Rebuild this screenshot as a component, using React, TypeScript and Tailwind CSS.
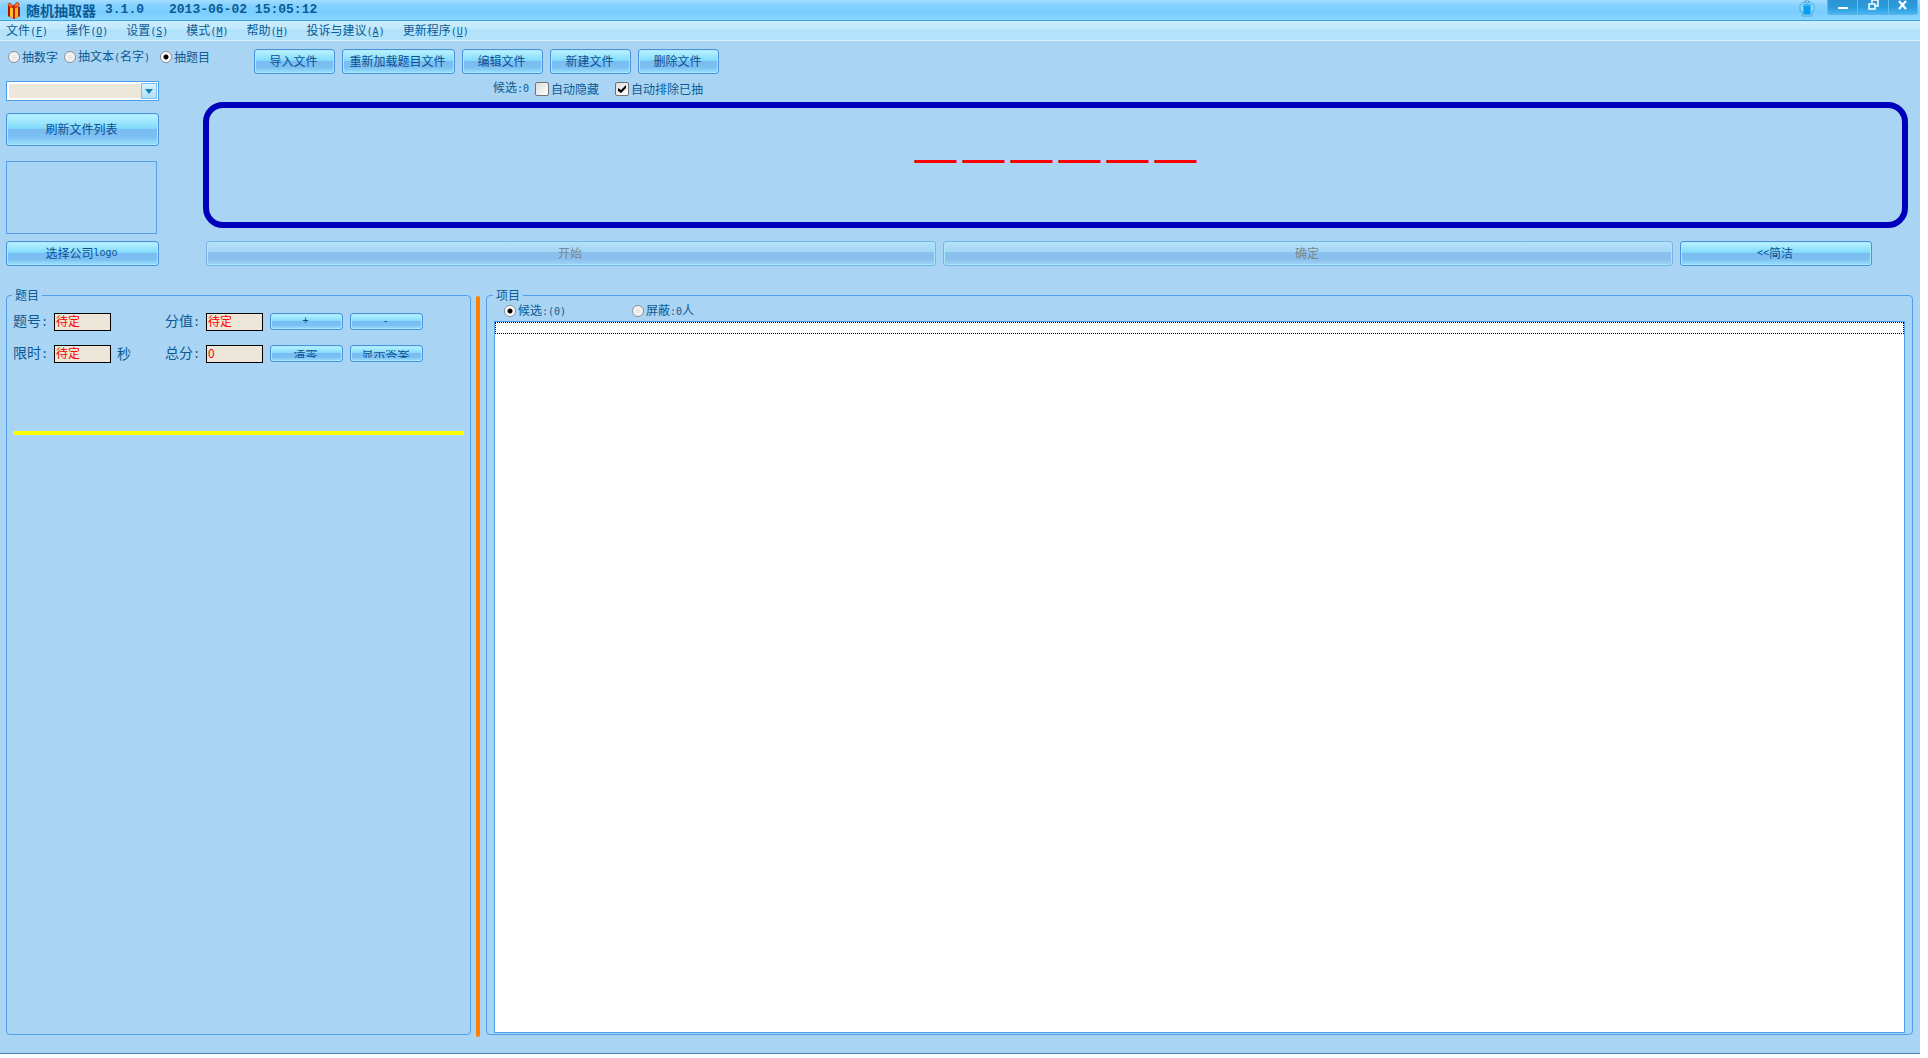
import { useState } from "react";
import type { ReactNode } from "react";

const L = ({ children }: { children: ReactNode }) => (
  <span className="font-['DejaVu_Sans_Mono',monospace] text-[10px]">{children}</span>
);

const menus = [
  ["文件", "F"],
  ["操作", "O"],
  ["设置", "S"],
  ["模式", "M"],
  ["帮助", "H"],
  ["投诉与建议", "A"],
  ["更新程序", "U"],
];

function SkinButton({ children, className = "", disabled = false }: { children: ReactNode; className?: string; disabled?: boolean }) {
  const look = disabled
    ? "border-[#7ab3e2] bg-[linear-gradient(#b9dff8_0%,#a0d6f6_44%,#8abfee_46%,#8ac0ee_75%,#a3d4f5_100%)] text-[#7d8790]"
    : "border-[#4a92dd] bg-[linear-gradient(#bdf3fe_0%,#82dbfc_46%,#7abcf2_50%,#7cc0f3_75%,#9be2fb_100%)] text-[#0b4f91]";
  return (
    <button
      type="button"
      disabled={disabled}
      className={`flex items-center justify-center overflow-hidden rounded-[3px] border pr-[2px] pb-[2px] text-[12px] leading-3 whitespace-nowrap shadow-[inset_0_0_0_1px_#a8eafd] ${look} ${className}`}
    >
      {children}
    </button>
  );
}

function Radio({ name, children, checked, onChange, className = "" }: { name: string; children: ReactNode; checked: boolean; onChange: () => void; className?: string }) {
  return (
    <label className={`flex items-center gap-[2px] leading-3 whitespace-nowrap ${className}`}>
      <input
        type="radio"
        name={name}
        checked={checked}
        onChange={onChange}
        className="size-3 shrink-0 appearance-none rounded-full border border-[#8d8f92] bg-[radial-gradient(#e4e4e4,#ffffff)] checked:bg-[radial-gradient(circle,#000_0_2px,#fff_3px)]"
      />
      <span>{children}</span>
    </label>
  );
}

function Check({ children, initial = false }: { children: ReactNode; initial?: boolean }) {
  const [on, setOn] = useState(initial);
  return (
    <label className="flex items-center gap-[2px] leading-3 whitespace-nowrap">
      <span className="relative flex size-[14px] shrink-0">
        <input
          type="checkbox"
          checked={on}
          onChange={() => setOn(!on)}
          className="size-[14px] appearance-none rounded-[2px] border border-[#6f7375] bg-[linear-gradient(135deg,#dedede,#ffffff)] checked:bg-white"
        />
        {on && (
          <svg viewBox="0 0 14 14" className="pointer-events-none absolute inset-0 size-[14px]">
            <path d="M3 6v3l3 2 5-5V3L6 8z" fill="#000" />
          </svg>
        )}
      </span>
      <span>{children}</span>
    </label>
  );
}

function Field({ id, label, value }: { id: string; label: string; value: string }) {
  return (
    <>
      <label htmlFor={id} className="w-[40px] shrink-0 pb-[2px] text-[14px] leading-4 whitespace-nowrap">
        {label}
        <span className="font-['Liberation_Mono',monospace] text-[12px]">:</span>
      </label>
      <input
        id={id}
        readOnly
        value={value}
        className="ml-px h-[18px] w-[57px] shrink-0 border border-black bg-[#ece7d8] px-px pb-[3px] text-[12px] leading-3 text-[#ff0000] outline-none"
      />
    </>
  );
}

function Gift() {
  return (
    <svg viewBox="0 0 14 17" className="ml-[7px] h-[17px] w-[14px] shrink-0">
      <path d="M1 4l5-1 7 2v9l-6 3-6-3z" fill="#e3200e" />
      <path d="M1 4l2 1v10l-2-1z" fill="#b01205" />
      <path d="M3 5l3 1v10l-3-1z" fill="#ffc21a" />
      <path d="M6 6h2v11l-2-1z" fill="#c41a0a" />
      <path d="M8 6l3-1v10l-3 1z" fill="#ffb31a" />
      <path d="M11 5l2 0v9l-2 1z" fill="#b81808" />
      <path d="M6 5C5 1 1 0 1 3l2 2zM7 5c1-5 5-6 5-2L10 5z" fill="#ff7a22" stroke="#b8260a" strokeWidth=".8" />
    </svg>
  );
}

function Shirt() {
  return (
    <svg viewBox="0 0 16 17" className="h-[17px] w-4">
      <path d="M5 2h6l4 3v6h-2v5H3v-5H1V5z" fill="#8fdcfd" stroke="#4aa8e2" />
      <path d="M4 4h8v11H4z" fill="#3db6f8" />
      <path d="M5 6h6v8H5z" fill="#0c9cf0" />
      <path d="M6 1h4l-1 2H7z" fill="#e8faff" stroke="#2b87c8" strokeWidth=".8" />
    </svg>
  );
}

function Title() {
  return (
    <header className="flex h-[21px] shrink-0 items-start justify-between rounded-tl-md border-b border-[#3aa3e8] bg-[linear-gradient(#a5dcff_0%,#86d2ff_25%,#78cdff_60%,#8ad6ff_100%)]">
      <div className="flex h-5 items-center">
        <Gift />
        <h1 className="ml-[5px] flex items-center text-[14px] leading-4 font-bold text-[#0b5a94]">
          随机抽取器
          <span className="ml-[9px] font-['Liberation_Mono',monospace] text-[13px] whitespace-pre">3.1.0</span>
          <span className="ml-[25px] font-['Liberation_Mono',monospace] text-[13px] whitespace-pre">2013-06-02 15:05:12</span>
        </h1>
      </div>
      <div className="flex items-start pr-[2px]">
        <button type="button" aria-label="皮肤" className="mr-3">
          <Shirt />
        </button>
        <div className="flex h-[15px] divide-x divide-[#5fc0f2] overflow-hidden rounded-b-[3px] border border-t-0 border-[#5db5ea] bg-[linear-gradient(#2c93d3,#2a9bdd_50%,#45b4ee)]">
          <button type="button" aria-label="最小化" className="w-[30px]">
            <svg viewBox="0 0 30 14" className="h-[14px] w-[30px]"><path d="M10 7h10v2H10z" fill="#fff" /></svg>
          </button>
          <button type="button" aria-label="还原" className="w-[31px]">
            <svg viewBox="0 0 31 14" className="h-[14px] w-[31px]">
              <path d="M14 3V0h6v6h-3" fill="none" stroke="#fff" strokeWidth="1.5" />
              <path d="M11 4h6v5h-6z" fill="none" stroke="#fff" strokeWidth="1.5" />
            </svg>
          </button>
          <button type="button" aria-label="关闭" className="w-[28px]">
            <svg viewBox="0 0 28 14" className="h-[14px] w-[28px]"><path d="M10 1l7 8M17 1l-7 8" stroke="#fff" strokeWidth="2.2" /></svg>
          </button>
        </div>
      </div>
    </header>
  );
}

export default function App() {
  const [mode, setMode] = useState(2);
  const [view, setView] = useState(0);
  return (
    <div className="flex h-screen flex-col bg-white pr-2 pb-1 font-['Noto_Sans_CJK_SC',sans-serif] text-[12px] text-[#0b5a94]">
      <div className="flex min-h-0 flex-1 flex-col border-b border-[#4a80b4] bg-[#aad4f3]">
        <Title />
        <nav className="flex h-5 shrink-0 items-center gap-[18px] border-b border-[#d9f3fd] bg-[linear-gradient(#cdedff_0%,#c0e8fd_42%,#b2e3fb_46%)] pt-px pl-[6px]">
          {menus.map(([name, key]) => (
            <button key={key} type="button" className="leading-4 whitespace-nowrap">
              {name}
              <L>(<u>{key}</u>)</L>
            </button>
          ))}
        </nav>

        <div className="flex shrink-0">
          <aside className="flex w-[203px] shrink-0 flex-col pl-[6px]">
            <div className="mt-[10px] flex h-3 pl-[2px]">
              <Radio name="mode" checked={mode === 0} onChange={() => setMode(0)}>抽数字</Radio>
              <Radio name="mode" checked={mode === 1} onChange={() => setMode(1)} className="ml-[6px]">抽文本<L>(</L>名字<L>)</L></Radio>
              <Radio name="mode" checked={mode === 2} onChange={() => setMode(2)} className="ml-[10px]">抽题目</Radio>
            </div>
            <div className="relative mt-[18px] h-5 w-[153px]">
              <select
                aria-label="题目文件"
                className="h-5 w-full appearance-none border border-[#4f9fee] bg-[#ece7d8] shadow-[inset_0_0_0_2px_#fff] outline-none"
              />
              <span className="pointer-events-none absolute top-[2px] right-[2px] flex h-4 w-4 items-center justify-center border border-[#7cc0ee] bg-[linear-gradient(#d8f2fe,#b0e0fa)]">
                <svg viewBox="0 0 8 5" className="h-[5px] w-2"><path d="M0 0h8L4 5z" fill="#1584b0" /></svg>
              </span>
            </div>
            <SkinButton className="mt-3 h-[33px] w-[153px]">刷新文件列表</SkinButton>
            <div className="mt-[15px] h-[73px] w-[151px] border border-[#559fee]" />
            <SkinButton className="mt-[7px] h-[25px] w-[153px]">选择公司<L>logo</L></SkinButton>
          </aside>

          <div className="flex min-w-0 flex-1 flex-col pr-3">
            <div className="mt-2 ml-[51px] flex gap-[7px]">
              <SkinButton className="h-[25px] w-[81px]">导入文件</SkinButton>
              <SkinButton className="h-[25px] w-[113px]">重新加载题目文件</SkinButton>
              <SkinButton className="h-[25px] w-[81px]">编辑文件</SkinButton>
              <SkinButton className="h-[25px] w-[81px]">新建文件</SkinButton>
              <SkinButton className="h-[25px] w-[81px]">删除文件</SkinButton>
            </div>
            <div className="mt-2 ml-[290px] flex h-[14px] items-center">
              <span className="w-[42px] pb-[2px] leading-3 whitespace-nowrap">候选<L>:0</L></span>
              <Check>自动隐藏</Check>
              <div className="w-4" />
              <Check initial>自动排除已抽</Check>
            </div>
            <output className="mt-[6px] flex h-[126px] items-center justify-center gap-[6px] rounded-[20px] border-[6px] border-[#0000bb] pb-[52px] text-[42px] leading-[42px] font-bold text-[#ff0000] [text-shadow:0_1px_0_#ff0000]">
              {[0, 1, 2, 3, 4, 5].map((n) => (
                <span key={n}>＿</span>
              ))}
            </output>
            <div className="mt-[13px] mr-9 ml-[3px] flex h-[25px] gap-[7px]">
              <SkinButton disabled className="h-full flex-1">开始</SkinButton>
              <SkinButton disabled className="h-full flex-1">确定</SkinButton>
              <SkinButton className="h-full w-[192px]"><L>&lt;&lt;</L>简洁</SkinButton>
            </div>
          </div>
        </div>

        <main className="mt-[22px] flex min-h-0 flex-1 pr-[7px] pb-4 pl-[6px]">
          <fieldset className="mb-[2px] flex w-[465px] shrink-0 flex-col rounded-[4px] border border-[#4f9fee] px-[6px]">
            <legend className="ml-[-1px] px-[3px] text-[12px] leading-[14px]">题目</legend>
            <div className="mt-[11px] flex h-[18px] items-center">
              <Field id="no" label="题号" value="待定" />
              <div className="w-[54px]" />
              <Field id="score" label="分值" value="待定" />
              <SkinButton className="ml-[7px] h-[17px] w-[73px] self-start"><L>+</L></SkinButton>
              <SkinButton className="ml-[7px] h-[17px] w-[73px] self-start"><L>-</L></SkinButton>
            </div>
            <div className="mt-[14px] flex h-[18px] items-center">
              <Field id="limit" label="限时" value="待定" />
              <div className="w-[54px] pb-[2px] pl-[6px] text-[14px] leading-4">秒</div>
              <Field id="total" label="总分" value="0" />
              <SkinButton className="ml-[7px] h-[17px] w-[73px] self-start">
                <span className="mt-[2px] flex h-2 items-center overflow-hidden">清零</span>
              </SkinButton>
              <SkinButton className="ml-[7px] h-[17px] w-[73px] self-start">
                <span className="mt-[2px] flex h-2 items-center overflow-hidden">显示答案</span>
              </SkinButton>
            </div>
            <div className="mt-[68px] h-1 rounded-l-sm bg-[#ffff00]" />
          </fieldset>

          <div className="mt-2 ml-[5px] w-1 shrink-0 rounded-sm bg-[#ff8000]" />

          <fieldset className="mb-[2px] ml-[6px] flex min-w-0 flex-1 flex-col rounded-[4px] border border-[#4f9fee] px-[7px] pb-px">
            <legend className="ml-[-1px] px-[3px] text-[12px] leading-[14px]">项目</legend>
            <div className="mt-[3px] flex h-3 pl-[10px]">
              <Radio name="view" checked={view === 0} onChange={() => setView(0)} className="w-[128px]">候选<L>:(0)</L></Radio>
              <Radio name="view" checked={view === 1} onChange={() => setView(1)}>屏蔽<L>:0</L>人</Radio>
            </div>
            <div role="listbox" aria-label="项目列表" className="mt-1 flex-1 border border-[#4f9fee] bg-white">
              <div role="option" aria-selected={false} className="h-3 border border-dotted border-black" />
            </div>
          </fieldset>
        </main>
      </div>
    </div>
  );
}
